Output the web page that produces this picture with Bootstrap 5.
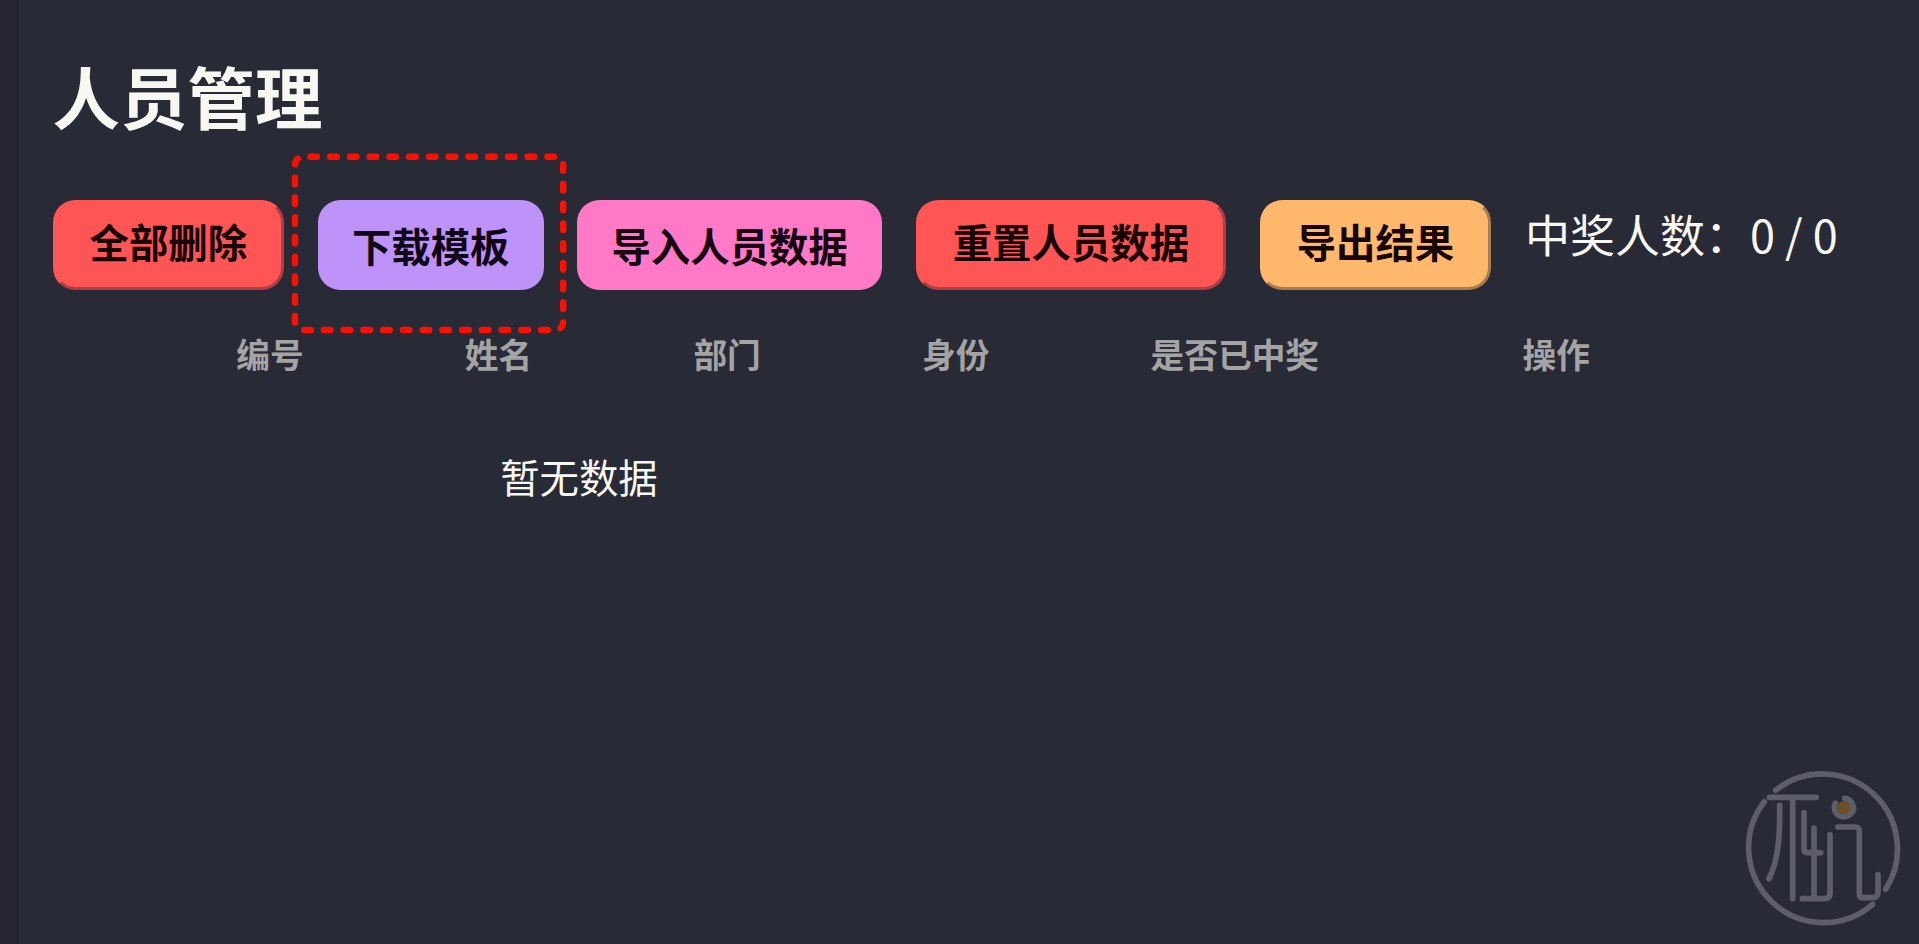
<!DOCTYPE html>
<html lang="zh-CN">
<head>
<meta charset="utf-8">
<title>人员管理</title>
<link rel="stylesheet" href="https://cdn.jsdelivr.net/npm/bootstrap@5.3.0/dist/css/bootstrap.min.css">
<style>
  body { background: #282a36; color: #f8f8f2; font-family: "Noto Sans CJK SC", sans-serif; height: 944px; }
  .side-edge { width: 19px; background: #242530; }
  .panel { padding: 47px 0 0 33.6px; }
  .page-title { font-size: 67.5px; line-height: 96px; font-weight: 700; margin: 0 0 57px; }
  .toolbar-row { gap: 33.7px; height: 91px; }
  .tool-btn { height: 90.4px; border-radius: 22.4px; font-size: 39.4px; line-height: 1; font-weight: 700; padding: 0; width: 231.5px; border: 0; }
  .tool-btn, .tool-btn:hover { color: #160506; }
  .tool-btn.raised { border: 3px solid; padding: 0 0 8px; }
  .c-red, .c-red:hover { background: #ff5555; }
  .raised.c-red { border-color: #ff5555 #b03e44 #b03e44 #ff5555; }
  .c-purple, .c-purple:hover { background: #bd93f9; color: #100716; }
  .c-pink, .c-pink:hover { background: #ff79c6; color: #160610; }
  .c-orange, .c-orange:hover { background: #ffb86c; }
  .raised.c-orange { border-color: #ffb86c #a77d50 #a77d50 #ffb86c; }
  .counter { font-size: 45px; line-height: 68px; }
  .head-row { padding-left: 183.6px; margin-top: 39px; font-size: 33.7px; line-height: 48px; font-weight: 700; color: #a4a4a4; }
  .head-cell { width: 228.6px; }
  .head-cell.wide { width: 372px; }
  .empty-note { margin: 70px 0 0 447.6px; font-size: 39.4px; line-height: 56px; }
  .highlight-frame { left: 285px; top: 147px; }
  .brand-seal { right: 0; bottom: 0; }
</style>
</head>
<body class="d-flex position-relative overflow-hidden">
  <aside class="side-edge flex-shrink-0"></aside>
  <main class="panel flex-grow-1">
    <h1 class="page-title">人员管理</h1>
    <div class="toolbar-row d-flex align-items-start text-nowrap">
      <button class="btn tool-btn raised c-red">全部删除</button>
      <button class="btn tool-btn c-purple" style="width:225.8px">下载模板</button>
      <button class="btn tool-btn c-pink" style="width:304.8px">导入人员数据</button>
      <button class="btn tool-btn raised c-red" style="width:310.3px">重置人员数据</button>
      <button class="btn tool-btn raised c-orange">导出结果</button>
      <span class="counter">中奖人数：0 / 0</span>
    </div>
    <div class="head-row d-flex text-nowrap">
      <div class="head-cell">编号</div>
      <div class="head-cell">姓名</div>
      <div class="head-cell">部门</div>
      <div class="head-cell">身份</div>
      <div class="head-cell wide">是否已中奖</div>
      <div>操作</div>
    </div>
    <p class="empty-note">暂无数据</p>
  </main>

  <!-- Dashed callout around the template download button -->
  <svg class="highlight-frame position-absolute pe-none" width="290" height="195" viewBox="285 147 290 195" fill="none" stroke="#ff0f00" stroke-width="6.4" stroke-linecap="round">
    <path stroke-dasharray="6.6 13.15" d="M310.4 156.8H554.2Q563.2 156.8 563.2 165.8V321Q563.2 330 554.2 330H304Q295 330 295 321V165.8Q295 156.8 304 156.8H306"/>
  </svg>

  <!-- Brand seal -->
  <svg class="brand-seal position-absolute pe-none" width="190" height="190" viewBox="0 0 570 570" fill="none" stroke="#5d5e69" stroke-width="17" stroke-linecap="round" stroke-linejoin="round">
    <path d="M140 109A225 225 0 0 1 470 406M431 451A225 225 0 0 1 106 143"/>
    <path d="M121 130H262M191 130V434M152 154C153 245 148 320 120 374"/>
    <path d="M225 176V286Q225 296 235 296H275M255 222V434M303 242V418Q303 434 287 434H220"/>
    <path d="M327 219H379Q391 219 391 231V419Q391 431 403 431H430Q447 431 447 414V362"/>
    <circle cx="364" cy="166" r="19" fill="#6b4b27" stroke="none"/>
    <path d="M319 148A28 28 0 1 0 347 133"/>
    <circle cx="344" cy="161" r="20" fill="#6b5025" stroke="none"/>
  </svg>
<script src="https://cdn.jsdelivr.net/npm/bootstrap@5.3.0/dist/js/bootstrap.bundle.min.js"></script>
</body>
</html>
